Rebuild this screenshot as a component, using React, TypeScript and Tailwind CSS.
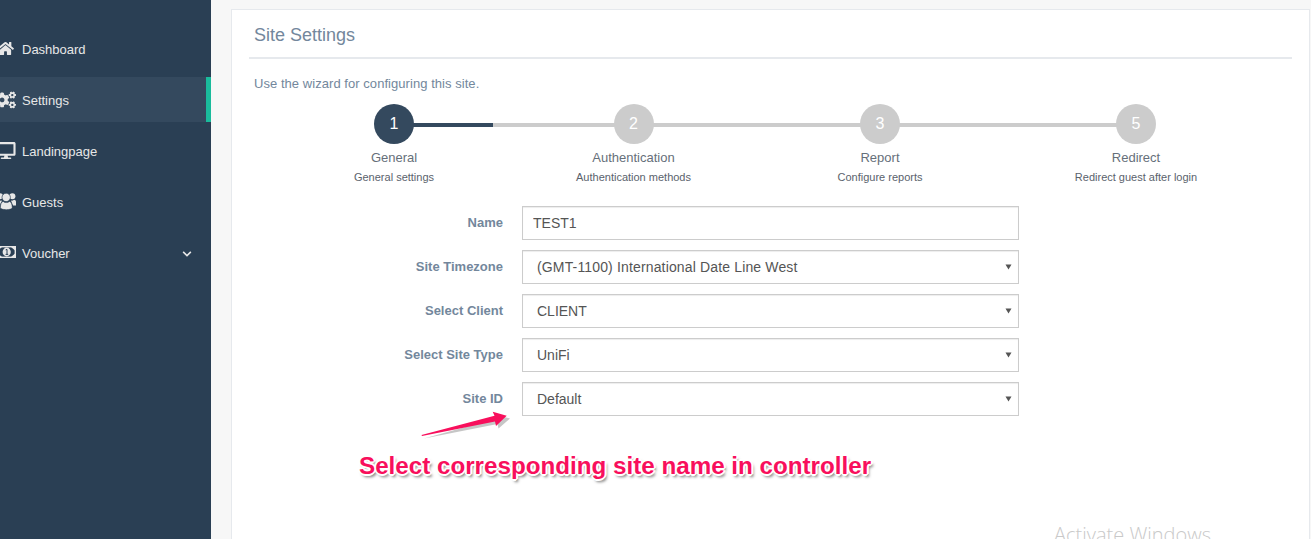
import React from "react";
import { FaHome, FaCogs, FaDesktop, FaChevronDown } from "react-icons/fa";

type IconProps = { className?: string };

const UsersIcon = ({ className }: IconProps) => (
  <svg viewBox="0 0 19 18" fill="currentColor" className={className}>
    <circle cx="3" cy="4.2" r="3" />
    <circle cx="15.4" cy="4.2" r="3" />
    <path d="M0 13.5V9.8C0 8.6 1 7.8 2 7.8 3 8.7 4.2 8.9 5 8.6 4.6 10 3.6 11 2.8 13.5Z" />
    <path d="M19 13.5V9.8C19 8.6 18 7.8 17 7.8 16 8.7 14.8 8.9 14 8.6 14.4 10 15 11 16 13.5Z" />
    <circle cx="9.2" cy="5.4" r="4.2" stroke="#2a3f54" strokeWidth="0.7" />
    <path d="M3.4 15.6C3.4 12 4.6 9.6 6.2 9.4 7.8 11 10.8 11 12.4 9.4 14 9.6 15.2 12 15.2 15.6 15.2 18.4 3.4 18.4 3.4 15.6Z" stroke="#2a3f54" strokeWidth="0.5" />
  </svg>
);

const MoneyIcon = ({ className }: IconProps) => (
  <svg viewBox="0 0 19 12" fill="currentColor" className={className}>
    <rect x="0.7" y="0.7" width="17.6" height="10.6" fill="none" stroke="currentColor" strokeWidth="1.4" />
    <path d="M1 1H5L1 4.5ZM18 1H14L18 4.5ZM1 11H5L1 7.5ZM18 11H14L18 7.5Z" />
    <ellipse cx="9.7" cy="6" rx="4.1" ry="4.4" />
    <path d="M8.7 3.9 10 3.4V8.3M8.6 8.4H11.2" fill="none" stroke="#2a3f54" strokeWidth="1" />
  </svg>
);

const nav = [
  { label: "Dashboard", Icon: FaHome, cls: "ml-[-3px] h-[15px] w-[17px]" },
  { label: "Settings", Icon: FaCogs, cls: "ml-[-5px] h-[18px] w-[21px]", active: true },
  { label: "Landingpage", Icon: FaDesktop, cls: "ml-[-4px] h-[17px] w-[20px]" },
  { label: "Guests", Icon: UsersIcon, cls: "ml-[-3px] mt-[-1px] h-[18px] w-[19px]" },
  { label: "Voucher", Icon: MoneyIcon, cls: "ml-[-3px] mt-[-1px] h-[12px] w-[19px]", chevron: true },
];

const steps = [
  { n: "1", title: "General", sub: "General settings", w: "w-[200px]", active: true },
  { n: "2", title: "Authentication", sub: "Authentication methods", w: "w-[279px]" },
  { n: "3", title: "Report", sub: "Configure reports", w: "w-[214px]" },
  { n: "5", title: "Redirect", sub: "Redirect guest after login", w: "w-[298px]" },
];

const fields = [
  { label: "Name", value: "TEST1" },
  { label: "Site Timezone", value: "(GMT-1100) International Date Line West", select: true, track: "tracking-[0.15px]" },
  { label: "Select Client", value: "CLIENT", select: true, track: "" },
  { label: "Select Site Type", value: "UniFi", select: true, track: "" },
  { label: "Site ID", value: "Default", select: true, track: "" },
];

export default function App() {
  return (
    <div className="flex h-[539px] w-[1311px] overflow-hidden bg-[#f7f7f7] font-['Liberation_Sans',Arial,sans-serif] text-[13px] text-[#73879c]">
      <aside className="flex w-[211px] shrink-0 flex-col gap-[6px] bg-[#2a3f54] pt-[26px] text-[#e7e7e7]">
        {nav.map(({ label, Icon, cls, active, chevron }) => (
          <div
            key={label}
            className={`flex h-[45px] items-center ${active ? "border-r-[5px] border-[#1abb9c] bg-[#34495e]" : ""}`}
          >
            <div className="flex w-[22px] shrink-0 justify-start">
              <Icon className={`shrink-0 ${cls}`} />
            </div>
            <span className="pt-[2px]">{label}</span>
            {chevron && <FaChevronDown className="ml-auto mr-[19px] mt-[2px] h-[10px] w-[10px]" />}
          </div>
        ))}
      </aside>

      <main className="relative flex-1 pl-[20px] pr-[1px] pt-[9px]">
        <div className="h-[560px] border border-[#e6e9ed] bg-white px-[17px] pt-[12px]">
          <div className="w-[1043px] border-b-2 border-[#e6e9ed] pb-[9px] pl-[5px] text-[18px] leading-[26px]">
            Site Settings
          </div>
          <p className="pl-[5px] pt-[16px] text-[13px] leading-[18px] tracking-[0.05px]">Use the wizard for configuring this site.</p>

          <div className="relative ml-[45px] mt-[11px] flex">
            <div className="absolute left-[100px] top-[19px] h-[4px] w-[742px] bg-[#cccccc]">
              <div className="h-full w-[99px] bg-[#34495e]" />
            </div>
            {steps.map((s) => (
              <div key={s.n} className={`relative flex flex-col items-center ${s.w}`}>
                <div
                  className={`flex h-[40px] w-[40px] items-center justify-center rounded-full text-[16px] text-white ${
                    s.active ? "bg-[#34495e]" : "bg-[#cccccc]"
                  }`}
                >
                  {s.n}
                </div>
                <div className="mt-[5px] text-[13px] leading-[18px] text-[#666f7a]">{s.title}</div>
                <div className="mt-[2px] text-[11px] leading-[16px] text-[#5a626c]">{s.sub}</div>
              </div>
            ))}
          </div>

          <div className="mt-[21px] flex flex-col gap-[10px]">
            {fields.map((f) => (
              <div key={f.label} className="flex items-center">
                <label className="w-[254px] text-right text-[13px] font-bold">{f.label}</label>
                <div className="relative ml-[19px] h-[34px] w-[497px]">
                  {f.select ? (
                    <>
                      <select
                        defaultValue={f.value}
                        className={`h-full w-full appearance-none rounded-none border border-[#cccccc] bg-white pl-[14px] text-[14px] text-[#555555] shadow-[inset_0_1px_1px_rgba(0,0,0,0.075)] outline-none ${f.track}`}
                      >
                        <option>{f.value}</option>
                      </select>
                      <svg viewBox="0 0 7 6" className="pointer-events-none absolute right-[7px] top-[14px] h-[6px] w-[7px]">
                        <path d="M0.5 0.5H6.5L3.5 5.5Z" fill="#555555" />
                      </svg>
                    </>
                  ) : (
                    <input
                      readOnly
                      value={f.value}
                      className="h-full w-full rounded-none border border-[#cccccc] bg-white pl-[10px] text-[14px] text-[#555555] shadow-[inset_0_1px_1px_rgba(0,0,0,0.075)] outline-none"
                    />
                  )}
                </div>
              </div>
            ))}
          </div>

          <div className="relative ml-[110px] mt-[36px] text-[24.2px] font-bold leading-[28px] text-[#f80f5c] [text-shadow:2px_0_0_#fff,-2px_0_0_#fff,0_2px_0_#fff,0_-2px_0_#fff,1px_1px_0_#fff,-1px_-1px_0_#fff,1px_-1px_0_#fff,-1px_1px_0_#fff,2px_3px_3px_rgba(0,0,0,0.55)]">
            Select corresponding site name in controller
          </div>
        </div>

        <svg viewBox="0 0 100 40" className="absolute left-[205px] top-[405px] h-[40px] w-[100px] overflow-visible">
          <path d="M6 31 L 78 11 L 77 7 L 92 11 L 80.5 21 L 79.5 16.5 Z" fill="#808080" opacity="0.45" transform="translate(2 2.5)" />
          <path d="M5.5 30 L 78.5 10.8 L 76.7 6.7 L 90.7 10.7 L 80 21 L 79 16.5 L 6 31 Z" fill="#f80f5c" />
        </svg>

        <div className="absolute left-[843px] top-[521px] font-['Open_Sans',sans-serif] text-[20px] font-light leading-[28px] text-[#c9c9c9]">
          Activate Windows
        </div>
      </main>
    </div>
  );
}
